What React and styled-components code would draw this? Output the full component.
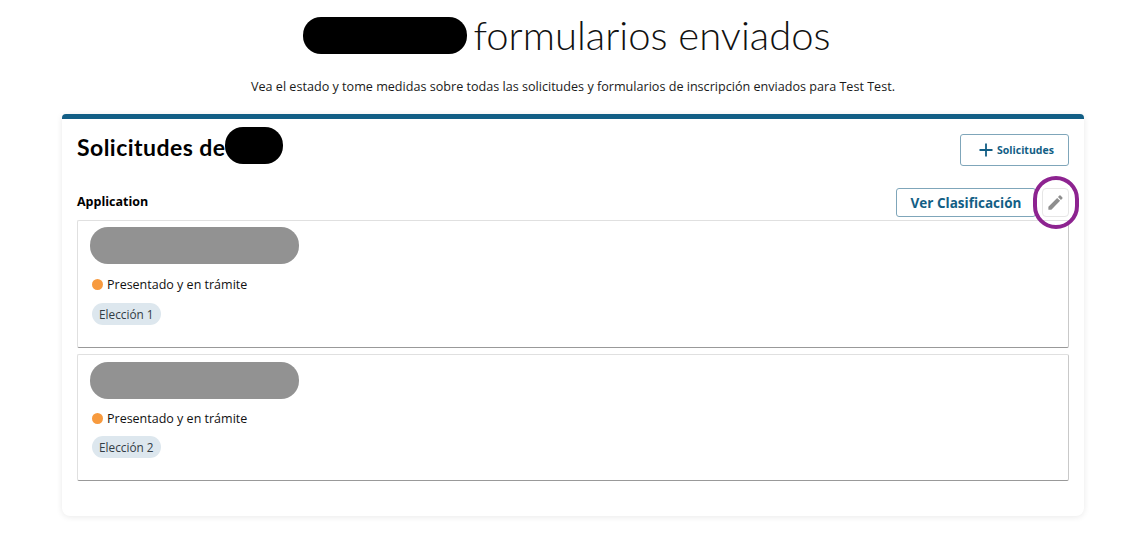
import React from 'react';
import styled, { createGlobalStyle } from 'styled-components';

const GlobalStyle = createGlobalStyle`
	html, body {
		margin: 0;
		padding: 0;
		background: #fff;
		font-family: 'Open Sans', sans-serif;
	}
`

const Page = styled.div`
	width: 1144px;
	height: 537px;
	overflow: hidden;
	display: flex;
	flex-direction: column;
	align-items: center;
`

const TitleRow = styled.div`
	display: flex;
	align-items: center;
	justify-content: center;
	gap: 6px;
	height: 37px;
	margin-top: 17px;
	padding-right: 10px;
`

const Redaction = styled.span`
	display: block;
	flex: none;
	width: ${({w}) => w}px;
	height: 37px;
	border-radius: 18px;
	background: ${({color}) => color || '#000'};
`

const Title = styled.h1`
	margin: 0;
	font-family: 'Lato', sans-serif;
	font-size: 40px;
	font-weight: 300;
	line-height: 37px;
	color: #111;
`

const Subtitle = styled.p`
	margin: 16px 0 0 2px;
	font-size: 12.6px;
	line-height: 33px;
	height: 29px;
	color: #1a1a1a;
`

const Card = styled.section`
	box-sizing: border-box;
	width: 1022px;
	height: 402px;
	margin-left: 2px;
	margin-top: 15px;
	padding: 8px 15px 0 15px;
	background: #fff;
	border-top: 5px solid #125e85;
	border-radius: 4px 4px 8px 8px;
	box-shadow: 0 1px 6px rgba(0, 0, 0, 0.09);
`

const CardHead = styled.div`
	display: flex;
	justify-content: space-between;
	align-items: flex-start;
	height: 61px;
`

const CardTitle = styled.div`
	display: flex;
	align-items: center;
	height: 37px;
`

const CardHeading = styled.h2`
	margin: 0;
	padding-top: 3px;
	font-family: 'Lato', sans-serif;
	font-size: 23px;
	font-weight: 700;
	letter-spacing: 0.45px;
	white-space: nowrap;
	color: #000;
`

const OutlineButton = styled.button`
	box-sizing: border-box;
	display: flex;
	align-items: center;
	justify-content: center;
	padding: 0;
	background: #fff;
	border: 1px solid ${({muted}) => muted ? '#e6e6e6' : '#7fa6ba'};
	border-radius: ${({muted}) => muted ? 4 : 3}px;
	color: #125e85;
	font-family: 'Open Sans', sans-serif;
	font-weight: 700;
`

const AddButton = styled(OutlineButton)`
	width: 109px;
	height: 32px;
	margin-top: 7px;
	gap: 3px;
	padding-left: 3px;
	font-size: 10.5px;
`

const SectionHead = styled.div`
	display: flex;
	align-items: center;
	height: 29px;
`

const SectionName = styled.h3`
	margin: 0 0 2px;
	flex: 1;
	font-size: 12.5px;
	font-weight: 700;
	color: #000;
`

const RankButton = styled(OutlineButton)`
	width: 140px;
	height: 29px;
	font-size: 13.5px;
`

const EditSlot = styled.div`
	position: relative;
	margin-left: 6px;
`

const EditButton = styled(OutlineButton)`
	width: 27px;
	height: 29px;
`

const Highlight = styled.span`
	position: absolute;
	left: -9px;
	top: -12px;
	width: 46px;
	height: 53px;
	box-sizing: border-box;
	border: 4px solid #8d2390;
	border-radius: 23px;
	pointer-events: none;
`

const Entries = styled.div`
	display: flex;
	flex-direction: column;
	gap: 6px;
	margin-top: 3px;
`

const Entry = styled.article`
	box-sizing: border-box;
	height: ${({h}) => h}px;
	padding: ${({tight}) => tight ? 7 : 6}px 12px 0;
	border: 1px solid #e0e0e0;
	border-right-color: #c9c9c9;
	border-bottom: 1px solid #999;
	border-radius: 2px;
`

const Status = styled.div`
	display: flex;
	align-items: center;
	gap: 4px;
	margin-top: ${({tight}) => tight ? 10 : 11}px;
	margin-left: 2px;
	height: 18px;
	font-size: 12.5px;
	color: #111;
`

const Dot = styled.span`
	width: 11px;
	height: 11px;
	border-radius: 50%;
	background: #f79a3e;
`

const Tag = styled.span`
	display: inline-flex;
	align-items: center;
	height: 22px;
	margin-top: ${({tight}) => tight ? 9 : 10}px;
	margin-left: 2px;
	padding: 0 7px;
	border-radius: 11px;
	background: #dde7ee;
	color: #333c44;
	font-size: 11.8px;
`

const applications = [
	{ id: 1, label: 'Elección 1', height: 128, tight: false },
	{ id: 2, label: 'Elección 2', height: 127, tight: true }
];

export default function App() {
	return (
		<Page>
			<GlobalStyle />
			<TitleRow>
				<Redaction w={164} />
				<Title>formularios enviados</Title>
			</TitleRow>
			<Subtitle>Vea el estado y tome medidas sobre todas las solicitudes y formularios de inscripción enviados para Test Test.</Subtitle>
			<Card>
				<CardHead>
					<CardTitle>
						<CardHeading>Solicitudes de</CardHeading>
						<Redaction w={58} />
					</CardTitle>
					<AddButton>
						<svg width="16" height="16" viewBox="0 0 16 16" fill="none" stroke="#125e85" strokeWidth="1.8">
							<path d="M8 1.5v13M1.5 8h13" />
						</svg>
						Solicitudes
					</AddButton>
				</CardHead>
				<SectionHead>
					<SectionName>Application</SectionName>
					<RankButton>Ver Clasificación</RankButton>
					<EditSlot>
						<EditButton muted>
							<svg width="19" height="19" viewBox="0 0 24 24" fill="#8e8e8e">
								<path d="M3 17.25V21h3.75L17.81 9.94l-3.75-3.75L3 17.25zM20.71 7.04a1 1 0 0 0 0-1.41l-2.34-2.34a1 1 0 0 0-1.41 0l-1.83 1.83 3.75 3.75 1.83-1.83z" />
							</svg>
						</EditButton>
						<Highlight />
					</EditSlot>
				</SectionHead>
				<Entries>
					{applications.map(app => (
						<Entry key={app.id} h={app.height} tight={app.tight}>
							<Redaction w={209} color="#929292" />
							<Status tight={app.tight}><Dot />Presentado y en trámite</Status>
							<Tag tight={app.tight}>{app.label}</Tag>
						</Entry>
					))}
				</Entries>
			</Card>
		</Page>
	);
}
